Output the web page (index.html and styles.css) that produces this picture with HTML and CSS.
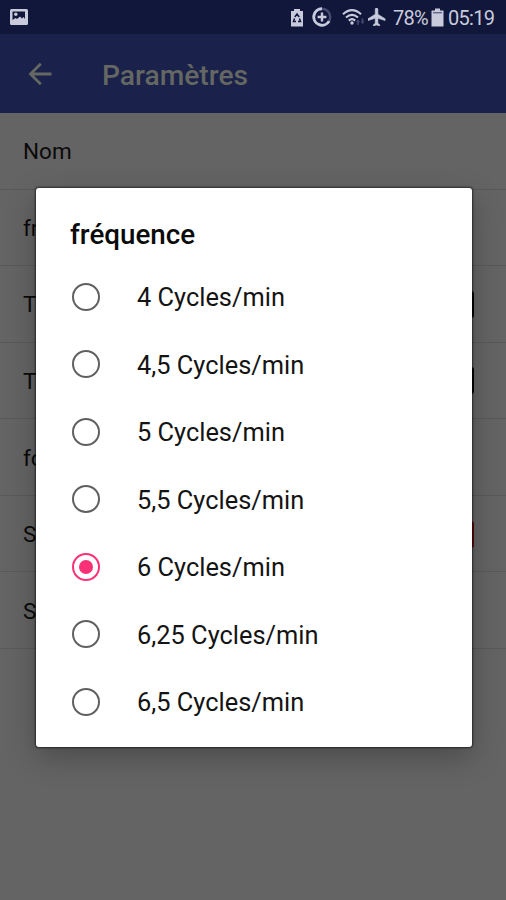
FILE: index.html
```
<!DOCTYPE html>
<html lang="fr">
<head>
  <meta charset="UTF-8" />
  <meta name="viewport" content="width=device-width, initial-scale=1.0"/>
  <title>Paramètres</title>
  <link rel="stylesheet" href="styles.css">
</head>
<body>
  <div class="screen">
    <div class="status-bar">
      <svg class="ic-picture" width="20" height="18" viewBox="0 0 20 18">
        <rect x="1" y="1" width="18" height="16" rx="1.500" fill="#c9cbdd"/>
        <path d="M3.500 3.500H16v7.500l-1.500-2-1.500 1.500-2-2-3 2.500-1.500-1-3 2z" fill="#11173a"/>
        <circle cx="6.800" cy="6.200" r="1.700" fill="#c9cbdd"/>
      </svg>
      <div class="status-icons">
        <svg class="ic-recycle" width="14" height="19" viewBox="0 0 14 19">
          <path d="M4 1h6v2h3v15.500H1V3h3z" fill="#c9cbdd"/>
          <path d="M4.800 9L7 6l2.200 3M4.500 10.500l-1 3h2.500M9.500 10.500l1 3H8" fill="none" stroke="#11173a" stroke-width="1.500"/>
        </svg>
        <svg class="ic-saver" width="20" height="20" viewBox="0 0 20 20">
          <circle cx="10" cy="10" r="8.200" fill="none" stroke="#454c72" stroke-width="2.400"/>
          <path d="M10 1.800a8.200 8.200 0 1 0 7.100 12.300" fill="none" stroke="#c9cbdd" stroke-width="2.900"/>
          <path d="M10 5.600v8.800M5.600 10h8.800" stroke="#c9cbdd" stroke-width="2.400"/>
        </svg>
        <svg class="ic-wifi" width="23" height="18" viewBox="0 0 23 18">
          <g fill="none" stroke="#c9cbdd" stroke-width="2.100">
            <path d="M1 6.200Q10 -2 19 6.200"/>
            <path d="M4 9.600Q10 4 16 9.600"/>
            <path d="M6.800 12.600Q10 9.800 13.200 12.600"/>
          </g>
          <circle cx="10" cy="15" r="1.700" fill="#c9cbdd"/>
          <path d="M14 14l2-2.500 2 2.500h-1.200v3h-1.600v-3zM18.500 13.500h1.200v-3h1.600v3h1.200l-2 2.500z" fill="#454c72"/>
        </svg>
        <svg class="ic-plane" width="18" height="18" viewBox="2 2 20 20">
          <path d="M21 16v-2l-8-5V3.500a1.500 1.500 0 0 0-3 0V9l-8 5v2l8-2.500V19l-2 1.500V22l3.500-1 3.500 1v-1.500L13 19v-5.500z" fill="#c9cbdd" stroke="#c9cbdd" stroke-width="0.600"/>
        </svg>
        <span class="percent">78%</span>
        <svg class="ic-battery" width="13" height="19" viewBox="0 0 13 19">
          <path d="M4 0.500h5v2h3q.5 0 .5.500v15q0 .5-.5.500H1q-.5 0-.5-.5V3q0-.5.500-.5h3z" fill="#c9cbdd"/>
          <path d="M2 4.700h9" stroke="#60668a" stroke-width="1.400"/>
        </svg>
        <span class="clock">05:19</span>
      </div>
    </div>

    <div class="app-bar">
      <svg width="24" height="24" viewBox="0 0 24 24">
        <path d="M23.500 12H2.500M12.800 1.800L2.500 12l10.300 10.200" fill="none" stroke="#646762" stroke-width="2.800"/>
      </svg>
      <h1>Paramètres</h1>
    </div>

    <div class="settings">
      <div class="setting">Nom</div>
      <div class="setting">fr</div>
      <div class="setting">T <span class="swatch"></span></div>
      <div class="setting">T <span class="swatch"></span></div>
      <div class="setting">fo</div>
      <div class="setting">S <span class="swatch swatch-red"></span></div>
      <div class="setting">S</div>
    </div>

    <div class="dialog">
      <h2>fréquence</h2>
      <div class="options">
        <label class="option"><input type="radio" name="freq"/>4 Cycles/min</label>
        <label class="option"><input type="radio" name="freq"/>4,5 Cycles/min</label>
        <label class="option"><input type="radio" name="freq"/>5 Cycles/min</label>
        <label class="option"><input type="radio" name="freq"/>5,5 Cycles/min</label>
        <label class="option"><input type="radio" name="freq" checked/>6 Cycles/min</label>
        <label class="option"><input type="radio" name="freq"/>6,25 Cycles/min</label>
        <label class="option"><input type="radio" name="freq"/>6,5 Cycles/min</label>
      </div>
    </div>
  </div>
</body>
</html>
```
FILE: styles.css
```
:root {
  --status: #11173a;
  --bar: #1a214b;
  --dimmed: #646464;
  --line: #595959;
  --icon: #c9cbdd;
  --accent: #fb3177;
}
* {
  box-sizing: border-box;
}
body {
  margin: 0;
  font-family: Roboto, sans-serif;
  background: var(--dimmed);
}
.screen {
  position: relative;
  height: 900px;
  overflow: hidden;
}
.status-bar {
  display: flex;
  align-items: center;
  justify-content: space-between;
  height: 34px;
  padding: 0 11px 0 9px;
  background: var(--status);
  color: var(--icon);
}
.status-icons {
  display: flex;
  align-items: center;
}
.ic-saver {
  margin-left: 8px;
}
.ic-wifi {
  margin-left: 10px;
}
.ic-plane {
  margin-left: 3px;
}
.percent, .clock {
  font-size: 20px;
  line-height: 34px;
  letter-spacing: -0.7px;
  white-space: nowrap;
  margin-top: 2px;
}
.percent {
  width: 35px;
  margin-left: 7px;
}
.ic-battery {
  margin-left: 3px;
}
.clock {
  width: 47px;
  margin-left: 4px;
}
.app-bar {
  display: flex;
  align-items: center;
  height: 79px;
  padding: 0 28px;
  background: var(--bar);
}
.app-bar h1 {
  margin: 3px 0 0 50px;
  font-size: 28.2px;
  font-weight: 500;
  color: #646762;
}
.setting {
  display: flex;
  align-items: center;
  justify-content: space-between;
  height: 76.57px;
  padding: 1px 32px 0 23px;
  border-bottom: 1px solid var(--line);
  font-size: 22.5px;
  color: #0a0a0a;
}
.swatch {
  width: 27px;
  height: 27px;
  border-radius: 3px;
  background: #050505;
}
.swatch-red {
  background: #650c08;
}
.dialog {
  position: absolute;
  top: 188px;
  left: 36px;
  width: 435.5px;
  height: 558.5px;
  padding: 30px 34px 0;
  border-radius: 3px;
  background: #fff;
  box-shadow: 0 0 2px 1px rgba(0, 0, 0, 0.55), 0 10px 30px rgba(0, 0, 0, 0.26);
}
.dialog h2 {
  margin: 0;
  font-size: 27.8px;
  line-height: 34px;
  font-weight: 500;
  color: #0b0b0b;
}
.options {
  margin-top: 11px;
}
.option {
  display: flex;
  align-items: center;
  height: 67.5px;
  padding-top: 1px;
  font-size: 25.4px;
  color: #141414;
}
.option input {
  appearance: none;
  display: grid;
  place-items: center;
  width: 28px;
  height: 28px;
  margin: -1px 37px 0 2px;
  border: 2px solid #606060;
  border-radius: 50%;
}
.option input:checked {
  border-color: var(--accent);
}
.option input:checked::before {
  content: '';
  width: 14px;
  height: 14px;
  border-radius: 50%;
  background: var(--accent);
}
```
